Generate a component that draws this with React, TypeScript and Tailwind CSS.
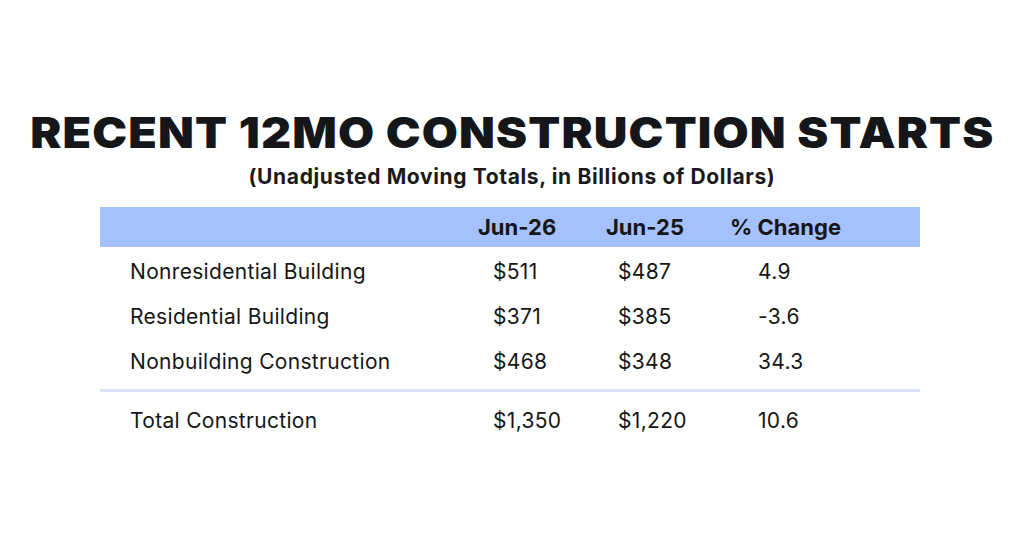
import * as React from "react";

const rows = [
  { label: "Nonresidential Building", a: "$511", b: "$487", c: "4.9" },
  { label: "Residential Building", a: "$371", b: "$385", c: "-3.6" },
  { label: "Nonbuilding Construction", a: "$468", b: "$348", c: "34.3" },
];

function Row({ label, a, b, c }: { label: string; a: string; b: string; c: string }) {
  return (
    <div className="grid grid-cols-[378px_128px_124px_1fr] h-[45px] items-center text-[21px] tracking-[0.015em] text-[#161616]">
      <span className="pl-[30px]">{label}</span>
      <span className="pl-[15px]">{a}</span>
      <span className="pl-[12px]">{b}</span>
      <span className="pl-[28px]">{c}</span>
    </div>
  );
}

export default function App() {
  return (
    <div
      className="w-[1024px] h-[533px] bg-white flex flex-col items-center pt-[112px]"
      style={{ fontFamily: "Inter, 'Noto Sans', sans-serif" }}
    >
      {/* Title */}
      <h1 className="text-[42px] leading-none font-black tracking-[0.025em] scale-x-[1.11] text-[#15161a]">
        RECENT 12MO CONSTRUCTION STARTS
      </h1>
      <p className="mt-[12px] text-[21px] leading-none font-bold tracking-[0.03em] text-[#1a1a1a]">
        (Unadjusted Moving Totals, in Billions of Dollars)
      </p>

      {/* Table */}
      <div className="w-[820px] self-start ml-[100px] mt-[20px]">
        <div className="grid grid-cols-[378px_128px_124px_1fr] h-[40px] items-center bg-[#a4c1fb] text-[22px] font-bold text-[#15161a]">
          <span />
          <span>Jun-26</span>
          <span>Jun-25</span>
          <span>% Change</span>
        </div>

        <div className="pt-[2px]">
          {rows.map((r) => (
            <Row key={r.label} {...r} />
          ))}
        </div>

        <div className="mt-[5px] h-[3px] bg-[#d9e2fa]" />

        <div className="mt-[6px]">
          <Row label="Total Construction" a="$1,350" b="$1,220" c="10.6" />
        </div>
      </div>
    </div>
  );
}
